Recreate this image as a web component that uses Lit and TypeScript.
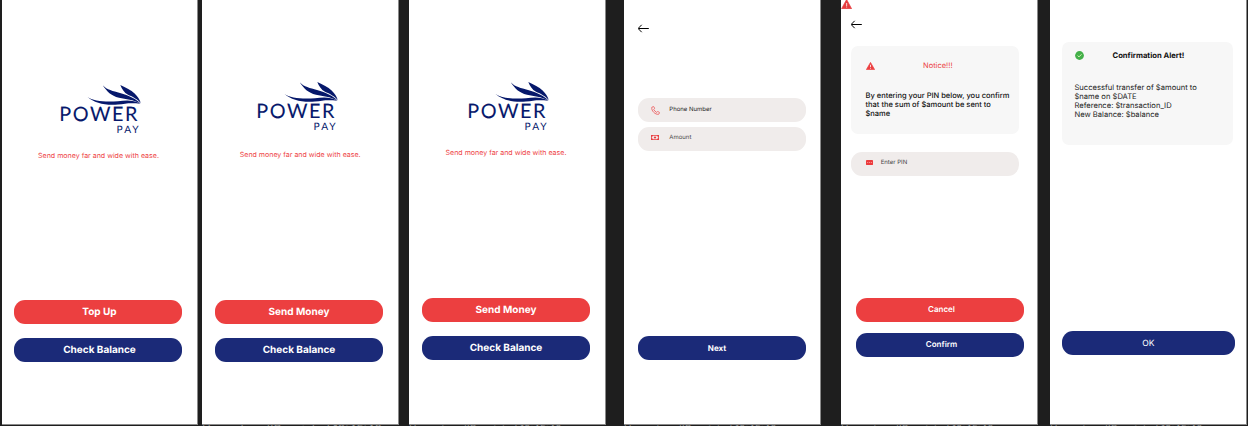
import { LitElement, html, css } from "lit";
import { customElement, property } from "lit/decorators.js";

@customElement("pp-logo")
class PpLogo extends LitElement {
  static styles = css`
    :host { display: block; width: 84px; height: 50px; }
    svg { display: block; overflow: visible; }
    text { font-family: Lato, "Open Sans", sans-serif; fill: #06186b; text-rendering: geometricPrecision; }
    .name { font-size: 19.8px; stroke: #06186b; stroke-width: .1px; }
    .sub { font-size: 10.2px; }
    path { fill: #06186b; }
  `;
  render() {
    return html`<svg width="84" height="50" viewBox="0 0 84 50">
      <path d="M27.3 12.7C33 17.3 46 18.2 58 17.2C66 16.2 73 15.5 80.5 19.8C71 18.5 66 19.3 58 20.6C45 21.7 34.5 19 27.3 12.7Z" />
      <path d="M42.7 1.3C47 6 53 7 60 9C69 11.5 76 15 80.5 19.4C73 15.6 66 15.1 59 13.7C51 12 47 7.5 42.7 1.3Z" />
      <path d="M60.3 1C66 4 71 6 74.6 9.4C77.6 12.4 79.8 15.5 80.8 19C76 13.8 72 12.6 68 10.7C64 8.7 62 5 60.3 1Z" />
      <text class="name" x="-0.7" y="36.7" textLength="78">POWER</text>
      <text class="sub" x="56.6" y="48.7" textLength="22">PAY</text>
    </svg>`;
  }
}

@customElement("pp-icon")
class PpIcon extends LitElement {
  @property() name = "";
  static styles = css`
    :host { display: block; }
    svg { display: block; }
  `;
  render() {
    const shapes: Record<string, unknown> = {
      back: html`<svg width="12" height="9" viewBox="0 0 12 9" fill="none" stroke="#000" stroke-width="1"><path d="M10.8 4.5H.4M3.7 .8L.1 4.5L3.7 8.2" /></svg>`,
      phone: html`<svg width="9" height="9" viewBox="0 0 9 9" fill="none" stroke="#ec4a4c" stroke-width=".75" stroke-linejoin="round"><path d="M2.3 .6L.8 1.3C.1 4.7 4.3 8.9 7.6 8.3L8.5 6.9C8.6 6.6 8.5 6.5 8.3 6.3L6.9 5.6C6.6 5.5 6.4 5.6 6.2 5.8L5.7 6.4C4.3 5.7 3.3 4.7 2.7 3.4L3.3 2.9C3.5 2.7 3.6 2.5 3.5 2.2L2.9 .8C2.8 .6 2.5 .5 2.3 .6Z" /></svg>`,
      cash: html`<svg width="8" height="5" viewBox="0 0 8 5"><rect width="8" height="5" fill="#e83f42" /><path d="M1.9 .8H6.1A1.2 1.2 0 0 0 7.2 1.7V3.3A1.2 1.2 0 0 0 6.1 4.2H1.9A1.2 1.2 0 0 0 .8 3.3V1.7A1.2 1.2 0 0 0 1.9 .8Z" fill="#f4e4e3" /><circle cx="4" cy="2.5" r="1.1" fill="#e83f42" /></svg>`,
      pin: html`<svg width="7" height="5" viewBox="0 0 7 5"><rect width="7" height="5" rx=".4" fill="#ec3b3d" /><path d="M1.1 2.5H2.2M3 2.5H4.1M4.9 2.5H6" stroke="#f4908f" stroke-width="1.1" /></svg>`,
      warn: html`<svg width="9" height="8" viewBox="0 0 9 8"><path d="M4.5 .4L8.6 7.6H.4Z" fill="#ec3f41" stroke="#ec3f41" stroke-width=".7" stroke-linejoin="round" /><path d="M4.5 2.8V5M4.5 5.8V6.7" stroke="#fff" stroke-width=".8" /></svg>`,
      alert: html`<svg width="12" height="9" viewBox="0 0 12 9"><path d="M5.6 -.5L10.6 8.7H.6Z" fill="#e63c3f" stroke="#e63c3f" stroke-width=".7" stroke-linejoin="round" /><path d="M5.6 3V5.9M5.6 6.5V7.6" stroke="#f7c8c5" stroke-width="1.1" /></svg>`,
      check: html`<svg width="9" height="9" viewBox="0 0 9 9"><circle cx="4.5" cy="4.5" r="4.4" fill="#43b049" /><path d="M2.6 4.6L4 5.9L6.5 3.3" fill="none" stroke="#e4f5c0" stroke-width=".9" /></svg>`,
    };
    return shapes[this.name];
  }
}

@customElement("app-root")
class AppRoot extends LitElement {
  static styles = css`
    :host { display: block; width: 1248px; height: 426px; overflow: hidden; background: #1e1e1e; font-family: Inter, sans-serif; color: #1d1d1d; text-rendering: geometricPrecision; }
    * { box-sizing: border-box; }
    .board { display: flex; padding-left: 1.5px; height: 426px; }
    .col { flex: none; width: 196.5px; height: 426px; overflow: hidden; }
    .c2 { margin-left: 4px; }
    .c3 { margin-left: 10.5px; }
    .c4 { margin-left: 18.5px; }
    .c5 { margin-left: 20.5px; }
    .c6 { margin-left: 12.5px; }
    .screen { position: relative; display: flex; flex-direction: column; align-items: flex-start; height: 424.5px; background: #fff; padding-left: 12.5px; border-right: .5px solid #8a8a8a; border-bottom: .5px solid #8a8a8a; }
    .caption { font-size: 10px; line-height: 10px; height: 10px; margin-top: -1px; white-space: nowrap; color: #858585; }
    .c2 .caption { font-size: 11.8px; }
    .home { padding-top: 84px; }
    .home2 { padding-top: 80.5px; }
    .logo { margin-left: 46.3px; }
    .home2 .logo { margin-left: 42.8px; }
    .c3 .home2 .logo { margin-left: 46.8px; }
    .tag { display: flex; justify-content: center; width: 168px; margin-top: 17px; padding-left: 1px; line-height: 10px; font-size: 7.05px; color: #ee4446; white-space: nowrap; }
    .home2 .tag { margin-top: 19px; padding-left: 3.4px; }
    .c3 .home2 .tag { margin-top: 17px; padding-left: 1px; }
    .btn { display: flex; align-items: center; justify-content: center; width: 168px; height: 24px; border-radius: 11px; background: #1b2a78; color: #fff; font-size: 10px; font-weight: 700; line-height: 12px; white-space: nowrap; }
    .red { background: #ec3f40; }
    .stack { display: flex; flex-direction: column; gap: 14px; }
    .stack .btn { padding-left: 3px; }
    .c2 .stack .btn { padding-left: 1px; }
    .c3 .stack .btn { padding-left: 1px; }
    .home .stack { margin-top: 139px; }
    .c2 .stack { margin-top: 140.5px; }
    .c3 .stack { margin-top: 140.9px; }
    .form { padding: 24.3px 0 0 13.5px; }
    .field { display: flex; align-items: flex-start; width: 168px; height: 24px; border-radius: 11px; background: #f0eceb; font-size: 6px; line-height: 8px; }
    .field pp-icon { flex: none; width: 9px; }
    .phone { margin-top: 64.7px; padding: 8px 0 0 13px; gap: 9.8px; }
    .phone span { padding-top: .5px; }
    .amount { margin-top: 5.4px; padding: 6.2px 0 0 13px; gap: 9.8px; color: #4a4a4a; }
    .amount span { padding-top: .5px; }
    .amount pp-icon { padding-top: 1.5px; }
    .next { margin-top: 185px; font-size: 8px; padding-right: 9px; }
    .notice { padding: 20px 0 0 9.5px; }
    .notice .corner { position: absolute; left: 0; top: 0; }
    .card { border-radius: 7px; background: #f7f7f7; }
    .card header { display: flex; }
    .warning { width: 168px; height: 88px; margin-top: 17.4px; padding: 13.6px 0 0 15px; }
    .warning header pp-icon { margin-top: 2px; }
    .warning h2 { margin: 0 0 0 48.5px; font-size: 7.5px; line-height: 12px; font-weight: 400; color: #ec4446; }
    .card p { margin: 0; line-height: 9px; font-size: 7.5px; white-space: pre; }
    .warning p { margin-top: 19px; font-weight: 500; color: #111; }
    .pin { margin-top: 17.6px; padding: 7px 0 0 15px; gap: 6.2px; color: #444; }
    .pin span { padding-top: .3px; }
    .pin pp-icon { padding-top: 1.2px; }
    .pair { display: flex; flex-direction: column; gap: 11px; margin: 122.4px 0 0 5px; }
    .pair .btn { font-size: 8px; font-weight: 600; padding: 0 0 2px 4px; }
    .done { padding: 41.9px 0 0 11.5px; }
    .receipt { width: 171px; height: 103.5px; padding: 8px 0 0 13px; }
    .receipt header pp-icon { margin-top: 1.2px; }
    .receipt h2 { margin: 0 0 0 29px; font-size: 7.65px; line-height: 12px; font-weight: 700; color: #111; }
    .receipt p { margin-top: 21.2px; font-size: 7.6px; }
    .ok { width: 173.5px; margin-top: 186px; font-size: 8.5px; font-weight: 400; padding-top: 1px; }
  `;

  private button(label: string, kind = "") {
    return html`<div class="btn ${kind}">${label}</div>`;
  }

  private home(cls: string, action: string) {
    return html`<div class="screen ${cls}">
      <pp-logo class="logo"></pp-logo>
      <div class="tag">Send money far and wide with ease.</div>
      <div class="stack">${this.button(action, "red")}${this.button("Check Balance")}</div>
    </div>`;
  }

  render() {
    const caption = html`<div class="caption">Home-type/(Receipted 10:45:40</div>`;
    return html`<div class="board">
      <div class="col c1">${this.home("home", "Top Up")}</div>
      <div class="col c2">${this.home("home2", "Send Money")}${caption}</div>
      <div class="col c3">${this.home("home2", "Send Money")}${caption}</div>
      <div class="col c4">
        <div class="screen form">
          <pp-icon name="back"></pp-icon>
          <div class="field phone"><pp-icon name="phone"></pp-icon><span>Phone Number</span></div>
          <div class="field amount"><pp-icon name="cash"></pp-icon><span>Amount</span></div>
          ${this.button("Next", "next")}
        </div>
        ${caption}
      </div>
      <div class="col c5">
        <div class="screen notice">
          <pp-icon class="corner" name="alert"></pp-icon>
          <pp-icon name="back"></pp-icon>
          <section class="card warning">
            <header><pp-icon name="warn"></pp-icon><h2>Notice!!!</h2></header>
            <p>By entering your PIN below, you confirm
that the sum of $amount be sent to
$name</p>
          </section>
          <div class="field pin"><pp-icon name="pin"></pp-icon><span>Enter PIN</span></div>
          <div class="pair">${this.button("Cancel", "red")}${this.button("Confirm")}</div>
        </div>
        ${caption}
      </div>
      <div class="col c6">
        <div class="screen done">
          <section class="card receipt">
            <header><pp-icon name="check"></pp-icon><h2>Confirmation Alert!</h2></header>
            <p>Successful transfer of $amount to
$name on $DATE
Reference: $transaction_ID
New Balance: $balance</p>
          </section>
          ${this.button("OK", "ok")}
        </div>
        ${caption}
      </div>
    </div>`;
  }
}
